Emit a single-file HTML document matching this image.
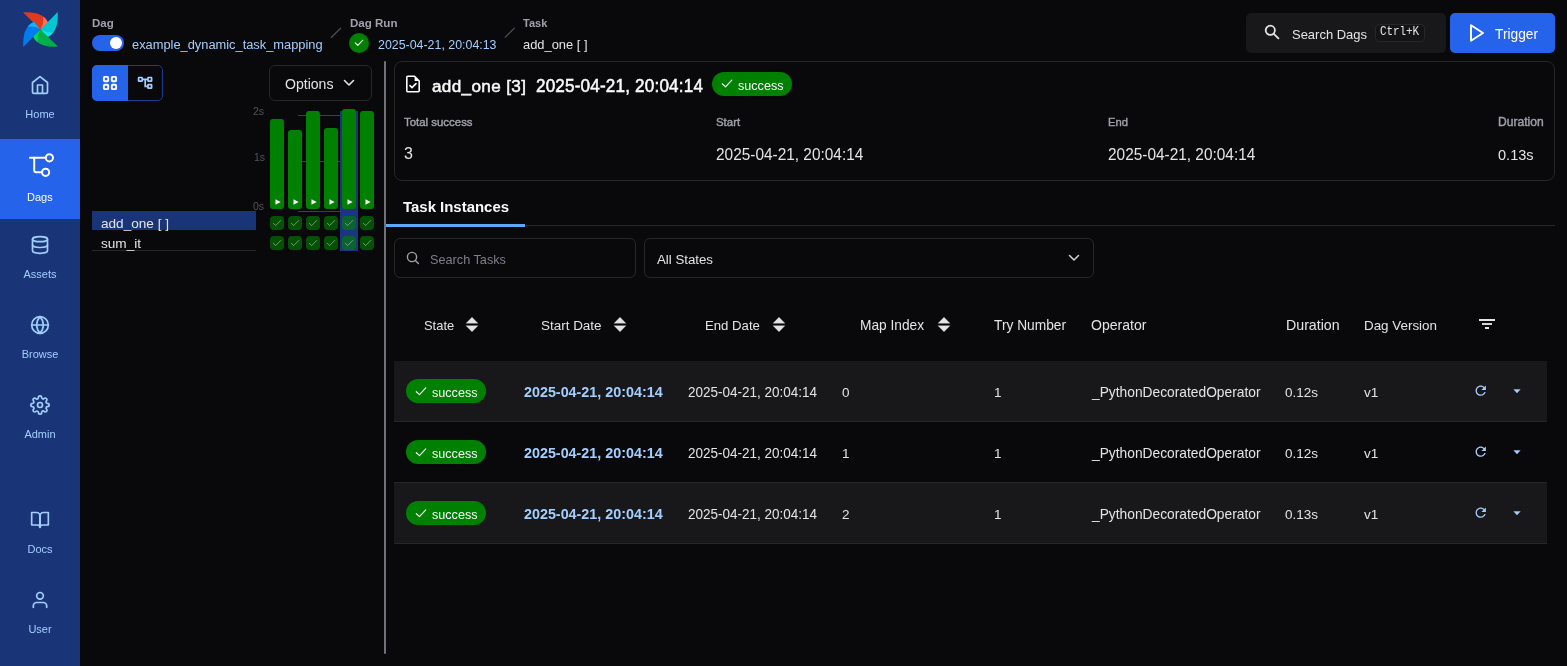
<!DOCTYPE html>
<html><head><meta charset="utf-8">
<style>
*{box-sizing:border-box;margin:0;padding:0}
html,body{width:1567px;height:666px;overflow:hidden;background:#09090b;font-family:"Liberation Sans",sans-serif;color:#fafafa;position:relative}
.a{position:absolute}
.t{position:absolute;white-space:nowrap;will-change:transform}
svg{overflow:visible}
</style></head><body>
<div class="a" style="left:0px;top:0px;width:80px;height:666px;background:#1a3478"></div>
<svg class="a" style="left:23px;top:12px;" width="35" height="35" viewBox="0 0 35 35"><g transform="rotate(0 17.5 17.5)"><path d="M0,0.3 C7,0 14,0.6 19,3.8 C22.3,6 24.2,8.6 25,11 L17.5,17.5 Z" fill="#E43921"/><path d="M20.2,4.6 C22.8,6.6 24.4,9 25,11 L17.5,17.5 C19.6,14.2 20.9,9.8 20.2,4.6 Z" fill="#FF7557"/></g><g transform="rotate(90 17.5 17.5)"><path d="M0,0.3 C7,0 14,0.6 19,3.8 C22.3,6 24.2,8.6 25,11 L17.5,17.5 Z" fill="#00C7D4"/><path d="M20.2,4.6 C22.8,6.6 24.4,9 25,11 L17.5,17.5 C19.6,14.2 20.9,9.8 20.2,4.6 Z" fill="#11E1EE"/></g><g transform="rotate(180 17.5 17.5)"><path d="M0,0.3 C7,0 14,0.6 19,3.8 C22.3,6 24.2,8.6 25,11 L17.5,17.5 Z" fill="#00AD46"/><path d="M20.2,4.6 C22.8,6.6 24.4,9 25,11 L17.5,17.5 C19.6,14.2 20.9,9.8 20.2,4.6 Z" fill="#04D659"/></g><g transform="rotate(270 17.5 17.5)"><path d="M0,0.3 C7,0 14,0.6 19,3.8 C22.3,6 24.2,8.6 25,11 L17.5,17.5 Z" fill="#017CEE"/><path d="M20.2,4.6 C22.8,6.6 24.4,9 25,11 L17.5,17.5 C19.6,14.2 20.9,9.8 20.2,4.6 Z" fill="#0CB6FF"/></g></svg>
<svg class="a" style="left:30px;top:75px;" width="20" height="20" viewBox="0 0 24 24"><g fill="none" stroke="#a3cfff" stroke-width="2" stroke-linecap="round" stroke-linejoin="round"><path d="M3 9l9-7 9 7v11a2 2 0 0 1-2 2H5a2 2 0 0 1-2-2z"/><path d="M9 22V12h6v10"/></g></svg>
<div class="t" style="left:0.00px;top:108.71px;font-size:11px;line-height:11px;color:#a3cfff;font-weight:400;width:80px;text-align:center">Home</div>
<div class="a" style="left:0px;top:139px;width:80px;height:80px;background:#2563eb"></div>
<svg class="a" style="left:28px;top:153px;" width="26" height="26" viewBox="0 0 26 26"><g fill="none" stroke="#fff" stroke-width="2" stroke-linecap="round"><path d="M2 4.8h15.8"/><circle cx="21.4" cy="4.8" r="3.6"/><path d="M6.2 4.8v12.5a2 2 0 0 0 2 2h6"/><circle cx="17.6" cy="19.3" r="3.6"/></g></svg>
<div class="t" style="left:27.40px;top:192.41px;font-size:11px;line-height:11px;color:#fff;font-weight:400;">Dags</div>
<svg class="a" style="left:30px;top:235px;" width="20" height="20" viewBox="0 0 24 24"><g fill="none" stroke="#a3cfff" stroke-width="2" stroke-linecap="round" stroke-linejoin="round"><ellipse cx="12" cy="5" rx="9" ry="3"/><path d="M21 12c0 1.66-4 3-9 3s-9-1.34-9-3"/><path d="M3 5v14c0 1.66 4 3 9 3s9-1.34 9-3V5"/></g></svg>
<div class="t" style="left:0.00px;top:268.71px;font-size:11px;line-height:11px;color:#a3cfff;font-weight:400;width:80px;text-align:center">Assets</div>
<svg class="a" style="left:30px;top:315px;" width="20" height="20" viewBox="0 0 24 24"><g fill="none" stroke="#a3cfff" stroke-width="2" stroke-linecap="round" stroke-linejoin="round"><circle cx="12" cy="12" r="10"/><path d="M2 12h20"/><path d="M12 2a15.3 15.3 0 0 1 4 10 15.3 15.3 0 0 1-4 10 15.3 15.3 0 0 1-4-10 15.3 15.3 0 0 1 4-10z"/></g></svg>
<div class="t" style="left:0.00px;top:348.71px;font-size:11px;line-height:11px;color:#a3cfff;font-weight:400;width:80px;text-align:center">Browse</div>
<svg class="a" style="left:30px;top:395px;" width="20" height="20" viewBox="0 0 24 24"><g fill="none" stroke="#a3cfff" stroke-width="2" stroke-linecap="round" stroke-linejoin="round"><circle cx="12" cy="12" r="3"/><path d="M19.4 15a1.65 1.65 0 0 0 .33 1.82l.06.06a2 2 0 0 1 0 2.83 2 2 0 0 1-2.83 0l-.06-.06a1.65 1.65 0 0 0-1.82-.33 1.65 1.65 0 0 0-1 1.51V21a2 2 0 0 1-2 2 2 2 0 0 1-2-2v-.09A1.65 1.65 0 0 0 9 19.4a1.65 1.65 0 0 0-1.82.33l-.06.06a2 2 0 0 1-2.83 0 2 2 0 0 1 0-2.83l.06-.06a1.65 1.65 0 0 0 .33-1.82 1.65 1.65 0 0 0-1.51-1H3a2 2 0 0 1-2-2 2 2 0 0 1 2-2h.09A1.650 1.65 0 0 0 4.6 9a1.65 1.65 0 0 0-.33-1.82l-.06-.06a2 2 0 0 1 0-2.83 2 2 0 0 1 2.83 0l.06.06a1.65 1.65 0 0 0 1.82.33H9a1.65 1.65 0 0 0 1-1.51V3a2 2 0 0 1 2-2 2 2 0 0 1 2 2v.09a1.65 1.65 0 0 0 1 1.51 1.65 1.65 0 0 0 1.82-.33l.06-.06a2 2 0 0 1 2.83 0 2 2 0 0 1 0 2.83l-.06.06a1.65 1.65 0 0 0-.33 1.82V9a1.65 1.65 0 0 0 1.51 1H21a2 2 0 0 1 2 2 2 2 0 0 1-2 2h-.09a1.65 1.65 0 0 0-1.51 1z"/></g></svg>
<div class="t" style="left:0.00px;top:428.71px;font-size:11px;line-height:11px;color:#a3cfff;font-weight:400;width:80px;text-align:center">Admin</div>
<svg class="a" style="left:30px;top:510px;" width="20" height="20" viewBox="0 0 24 24"><g fill="none" stroke="#a3cfff" stroke-width="2" stroke-linecap="round" stroke-linejoin="round"><path d="M2 3h6a4 4 0 0 1 4 4v14a3 3 0 0 0-3-3H2z"/><path d="M22 3h-6a4 4 0 0 0-4 4v14a3 3 0 0 1 3-3h7z"/></g></svg>
<div class="t" style="left:0.00px;top:543.71px;font-size:11px;line-height:11px;color:#a3cfff;font-weight:400;width:80px;text-align:center">Docs</div>
<svg class="a" style="left:30px;top:590px;" width="20" height="20" viewBox="0 0 24 24"><g fill="none" stroke="#a3cfff" stroke-width="2" stroke-linecap="round" stroke-linejoin="round"><path d="M20 21v-2a4 4 0 0 0-4-4H8a4 4 0 0 0-4 4v2"/><circle cx="12" cy="7" r="4"/></g></svg>
<div class="t" style="left:0.00px;top:623.71px;font-size:11px;line-height:11px;color:#a3cfff;font-weight:400;width:80px;text-align:center">User</div>
<div class="t" style="left:92.00px;top:18.10px;font-size:11.54px;line-height:11.54px;color:#a1a1aa;font-weight:700;">Dag</div>
<div class="a" style="left:92px;top:35px;width:32px;height:16px;background:#2563eb;border-radius:8px"></div>
<div class="a" style="left:110px;top:37px;width:12px;height:12px;background:#fff;border-radius:6px"></div>
<div class="t" style="left:132.40px;top:38.71px;font-size:12.85px;line-height:12.85px;color:#a3cfff;font-weight:400;">example_dynamic_task_mapping</div>
<svg class="a" style="left:0;top:0" width="1567" height="70"><g stroke="#52525b" stroke-width="1.2"><path d="M331 37.7L340.9 27.9"/><path d="M504.8 37.7L514.6 27.9"/></g></svg>
<div class="t" style="left:349.50px;top:18.11px;font-size:11.55px;line-height:11.55px;color:#a1a1aa;font-weight:700;">Dag Run</div>
<div class="a" style="left:349px;top:33px;width:20px;height:20px;background:#008000;border-radius:10px"></div>
<svg class="a" style="left:353px;top:37px;" width="12" height="12" viewBox="0 0 12 12"><path d="M2.2 5.8l2.6 2.6 5-5.2" fill="none" stroke="#fff" stroke-width="1.05" stroke-linecap="round" stroke-linejoin="round"/></svg>
<div class="t" style="left:377.50px;top:38.96px;font-size:12.4px;line-height:12.4px;color:#a3cfff;font-weight:400;transform:scaleY(1.1);transform-origin:0 84.65%;">2025-04-21, 20:04:13</div>
<div class="t" style="left:522.70px;top:18.11px;font-size:11px;line-height:11px;color:#a1a1aa;font-weight:700;">Task</div>
<div class="t" style="left:522.70px;top:38.91px;font-size:12.9px;line-height:12.9px;color:#e4e4e7;font-weight:400;">add_one [ ]</div>
<div class="a" style="left:1246px;top:13px;width:200px;height:40px;background:#18181b;border-radius:5px"></div>
<svg class="a" style="left:1264px;top:24px;" width="16" height="16" viewBox="0 0 16 16"><g fill="none" stroke="#e4e4e7" stroke-width="1.8" stroke-linecap="round"><circle cx="6.3" cy="6.3" r="4.6"/><path d="M9.8 9.8l4.6 4.6"/></g></svg>
<div class="t" style="left:1291.60px;top:29.20px;font-size:12.97px;line-height:12.97px;color:#e4e4e7;font-weight:400;">Search Dags</div>
<div class="a" style="left:1375px;top:24px;width:50px;height:18px;border:1px solid #27272a;border-radius:4px;background:#141416"></div>
<div class="t" style="left:1380.00px;top:27.38px;font-size:11px;line-height:11px;color:#e4e4e7;font-weight:400;font-family:'Liberation Mono',monospace;letter-spacing:-0.1px;transform:scaleY(1.12);transform-origin:0 85%">Ctrl+K</div>
<div class="a" style="left:1450px;top:13px;width:105px;height:40px;background:#2563eb;border-radius:5px"></div>
<svg class="a" style="left:1468px;top:23px;" width="18" height="20" viewBox="0 0 18 20"><path d="M3 2.2L15 10 3 17.8z" fill="none" stroke="#fff" stroke-width="1.9" stroke-linejoin="round"/></svg>
<div class="t" style="left:1495.00px;top:28.01px;font-size:13.74px;line-height:13.74px;color:#fff;font-weight:400;">Trigger</div>
<div class="a" style="left:92px;top:65px;width:71px;height:36px;border:1px solid #1d3b8f;border-radius:5px"></div>
<div class="a" style="left:92px;top:65px;width:35.5px;height:36px;background:#2563eb;border-radius:5px 0 0 5px"></div>
<svg class="a" style="left:102px;top:75px;" width="16" height="16" viewBox="0 0 16 16"><g fill="none" stroke="#fff" stroke-width="1.9"><rect x="1.9" y="1.9" width="4.3" height="4.3" rx="0.9"/><rect x="9.8" y="1.9" width="4.3" height="4.3" rx="0.9"/><rect x="1.9" y="9.8" width="4.3" height="4.3" rx="0.9"/><rect x="9.8" y="9.8" width="4.3" height="4.3" rx="0.9"/></g></svg>
<svg class="a" style="left:137px;top:76px;" width="16" height="14" viewBox="0 0 16 14"><g fill="none" stroke="#a3cfff" stroke-width="1.7"><rect x="1.6" y="1.5" width="3.6" height="3.6" rx="0.4"/><rect x="11" y="1.5" width="3.6" height="3.6" rx="0.4"/><rect x="11" y="8.6" width="3.6" height="3.6" rx="0.4"/><path d="M5.2 3.3h5.8M8.2 3.3v7.1h2.8"/></g></svg>
<div class="a" style="left:269px;top:65px;width:103px;height:36px;border:1px solid #27272a;border-radius:6px"></div>
<div class="t" style="left:284.50px;top:77.01px;font-size:14.07px;line-height:14.07px;color:#e4e4e7;font-weight:400;">Options</div>
<svg class="a" style="left:343px;top:78px;" width="12" height="10" viewBox="0 0 12 10"><path d="M1.5 2.5l4.5 4.5 4.5-4.5" fill="none" stroke="#e4e4e7" stroke-width="1.6" stroke-linecap="round" stroke-linejoin="round"/></svg>
<div class="t" style="left:252.60px;top:105.81px;font-size:10.5px;line-height:10.5px;color:#52525b;font-weight:400;">2s</div>
<div class="t" style="left:253.50px;top:152.31px;font-size:10.5px;line-height:10.5px;color:#52525b;font-weight:400;">1s</div>
<div class="t" style="left:252.60px;top:201.31px;font-size:10.5px;line-height:10.5px;color:#52525b;font-weight:400;">0s</div>
<div class="a" style="left:298px;top:115px;width:42px;height:1px;background:#3f3f46"></div>
<div class="a" style="left:298px;top:161px;width:42px;height:1px;background:#3f3f46"></div>
<div class="a" style="left:298px;top:211px;width:42px;height:1px;background:#3f3f46"></div>
<div class="a" style="left:92px;top:211px;width:164px;height:19px;background:#1a3478;overflow:hidden"></div>
<div class="a" style="left:92px;top:250px;width:164px;height:1px;background:#27272a"></div>
<div class="t" style="left:100.50px;top:217.00px;font-size:13.59px;line-height:13.59px;color:#e4e4e7;font-weight:400;clip-path:inset(0)">add_one [ ]</div>
<div class="t" style="left:100.50px;top:236.70px;font-size:13.6px;line-height:13.6px;color:#e4e4e7;font-weight:400;">sum_it</div>
<div class="a" style="left:340px;top:111px;width:18px;height:140px;background:#1e3a8a;opacity:.92"></div>
<div class="a" style="left:270px;top:119px;width:14px;height:89.5px;background:#008000;border-radius:3px"></div>
<svg class="a" style="left:274.5px;top:199px;" width="6" height="6" viewBox="0 0 6 6"><path d="M0.5 0.3L5.6 3 0.5 5.7z" fill="#fff"/></svg>
<div class="a" style="left:270px;top:216px;width:14px;height:14px;background:#008000;opacity:.62;border-radius:4px"></div>
<svg class="a" style="left:272px;top:219px;" width="10" height="8" viewBox="0 0 10 8"><path d="M1.4 4.4l2.3 2.1 5-5" fill="none" stroke="#b8c8b8" stroke-opacity=".75" stroke-width="0.8" stroke-linecap="round"/></svg>
<div class="a" style="left:270px;top:236px;width:14px;height:14px;background:#008000;opacity:.62;border-radius:4px"></div>
<svg class="a" style="left:272px;top:239px;" width="10" height="8" viewBox="0 0 10 8"><path d="M1.4 4.4l2.3 2.1 5-5" fill="none" stroke="#b8c8b8" stroke-opacity=".75" stroke-width="0.8" stroke-linecap="round"/></svg>
<div class="a" style="left:288px;top:130px;width:14px;height:78.5px;background:#008000;border-radius:3px"></div>
<svg class="a" style="left:292.5px;top:199px;" width="6" height="6" viewBox="0 0 6 6"><path d="M0.5 0.3L5.6 3 0.5 5.7z" fill="#fff"/></svg>
<div class="a" style="left:288px;top:216px;width:14px;height:14px;background:#008000;opacity:.62;border-radius:4px"></div>
<svg class="a" style="left:290px;top:219px;" width="10" height="8" viewBox="0 0 10 8"><path d="M1.4 4.4l2.3 2.1 5-5" fill="none" stroke="#b8c8b8" stroke-opacity=".75" stroke-width="0.8" stroke-linecap="round"/></svg>
<div class="a" style="left:288px;top:236px;width:14px;height:14px;background:#008000;opacity:.62;border-radius:4px"></div>
<svg class="a" style="left:290px;top:239px;" width="10" height="8" viewBox="0 0 10 8"><path d="M1.4 4.4l2.3 2.1 5-5" fill="none" stroke="#b8c8b8" stroke-opacity=".75" stroke-width="0.8" stroke-linecap="round"/></svg>
<div class="a" style="left:306px;top:111px;width:14px;height:97.5px;background:#008000;border-radius:3px"></div>
<svg class="a" style="left:310.5px;top:199px;" width="6" height="6" viewBox="0 0 6 6"><path d="M0.5 0.3L5.6 3 0.5 5.7z" fill="#fff"/></svg>
<div class="a" style="left:306px;top:216px;width:14px;height:14px;background:#008000;opacity:.62;border-radius:4px"></div>
<svg class="a" style="left:308px;top:219px;" width="10" height="8" viewBox="0 0 10 8"><path d="M1.4 4.4l2.3 2.1 5-5" fill="none" stroke="#b8c8b8" stroke-opacity=".75" stroke-width="0.8" stroke-linecap="round"/></svg>
<div class="a" style="left:306px;top:236px;width:14px;height:14px;background:#008000;opacity:.62;border-radius:4px"></div>
<svg class="a" style="left:308px;top:239px;" width="10" height="8" viewBox="0 0 10 8"><path d="M1.4 4.4l2.3 2.1 5-5" fill="none" stroke="#b8c8b8" stroke-opacity=".75" stroke-width="0.8" stroke-linecap="round"/></svg>
<div class="a" style="left:324px;top:128px;width:14px;height:80.5px;background:#008000;border-radius:3px"></div>
<svg class="a" style="left:328.5px;top:199px;" width="6" height="6" viewBox="0 0 6 6"><path d="M0.5 0.3L5.6 3 0.5 5.7z" fill="#fff"/></svg>
<div class="a" style="left:324px;top:216px;width:14px;height:14px;background:#008000;opacity:.62;border-radius:4px"></div>
<svg class="a" style="left:326px;top:219px;" width="10" height="8" viewBox="0 0 10 8"><path d="M1.4 4.4l2.3 2.1 5-5" fill="none" stroke="#b8c8b8" stroke-opacity=".75" stroke-width="0.8" stroke-linecap="round"/></svg>
<div class="a" style="left:324px;top:236px;width:14px;height:14px;background:#008000;opacity:.62;border-radius:4px"></div>
<svg class="a" style="left:326px;top:239px;" width="10" height="8" viewBox="0 0 10 8"><path d="M1.4 4.4l2.3 2.1 5-5" fill="none" stroke="#b8c8b8" stroke-opacity=".75" stroke-width="0.8" stroke-linecap="round"/></svg>
<div class="a" style="left:342px;top:109px;width:14px;height:99.5px;background:#008000;border-radius:3px"></div>
<svg class="a" style="left:346.5px;top:199px;" width="6" height="6" viewBox="0 0 6 6"><path d="M0.5 0.3L5.6 3 0.5 5.7z" fill="#fff"/></svg>
<div class="a" style="left:342px;top:216px;width:14px;height:14px;background:#008000;opacity:.62;border-radius:4px"></div>
<svg class="a" style="left:344px;top:219px;" width="10" height="8" viewBox="0 0 10 8"><path d="M1.4 4.4l2.3 2.1 5-5" fill="none" stroke="#b8c8b8" stroke-opacity=".75" stroke-width="0.8" stroke-linecap="round"/></svg>
<div class="a" style="left:342px;top:236px;width:14px;height:14px;background:#008000;opacity:.62;border-radius:4px"></div>
<svg class="a" style="left:344px;top:239px;" width="10" height="8" viewBox="0 0 10 8"><path d="M1.4 4.4l2.3 2.1 5-5" fill="none" stroke="#b8c8b8" stroke-opacity=".75" stroke-width="0.8" stroke-linecap="round"/></svg>
<div class="a" style="left:360px;top:111px;width:14px;height:97.5px;background:#008000;border-radius:3px"></div>
<svg class="a" style="left:364.5px;top:199px;" width="6" height="6" viewBox="0 0 6 6"><path d="M0.5 0.3L5.6 3 0.5 5.7z" fill="#fff"/></svg>
<div class="a" style="left:360px;top:216px;width:14px;height:14px;background:#008000;opacity:.62;border-radius:4px"></div>
<svg class="a" style="left:362px;top:219px;" width="10" height="8" viewBox="0 0 10 8"><path d="M1.4 4.4l2.3 2.1 5-5" fill="none" stroke="#b8c8b8" stroke-opacity=".75" stroke-width="0.8" stroke-linecap="round"/></svg>
<div class="a" style="left:360px;top:236px;width:14px;height:14px;background:#008000;opacity:.62;border-radius:4px"></div>
<svg class="a" style="left:362px;top:239px;" width="10" height="8" viewBox="0 0 10 8"><path d="M1.4 4.4l2.3 2.1 5-5" fill="none" stroke="#b8c8b8" stroke-opacity=".75" stroke-width="0.8" stroke-linecap="round"/></svg>
<div class="a" style="left:384px;top:61px;width:2px;height:593px;background:#71717a;border-radius:1px"></div>
<div class="a" style="left:394px;top:61px;width:1161px;height:120px;border:1px solid #27272a;border-radius:8px"></div>
<svg class="a" style="left:405px;top:75px;" width="16" height="18" viewBox="0 0 16 18"><path d="M9.6 1.3V5.9h4.6z" fill="#fff"/><g fill="none" stroke="#fff" stroke-width="1.6" stroke-linejoin="round" stroke-linecap="round"><path d="M9.5 1.3H2.8a1 1 0 0 0-1 1v13.4a1 1 0 0 0 1 1h10.4a1 1 0 0 0 1-1V6z"/><path d="M5 10.6l2 2 4-4"/></g></svg>
<div class="t" style="left:431.80px;top:78.01px;font-size:17.1px;line-height:17.1px;color:#fafafa;font-weight:400;letter-spacing:0.36px;-webkit-text-stroke:0.5px #fafafa;">add_one [3]</div>
<div class="t" style="left:535.90px;top:78.04px;font-size:17.1px;line-height:17.1px;color:#fafafa;font-weight:400;letter-spacing:0.18px;transform:scaleY(1.07);transform-origin:0 84.65%;-webkit-text-stroke:0.5px #fafafa;">2025-04-21, 20:04:14</div>
<div class="a" style="left:712px;top:72px;width:80px;height:24px;background:#008000;border-radius:12px"></div>
<svg class="a" style="left:720px;top:77px;" width="14" height="14" viewBox="0 0 14 14"><path d="M2.3 6.9l3.2 2.9 6.3-6.7" fill="none" stroke="#fff" stroke-width="1.15" stroke-linecap="round" stroke-linejoin="round"/></svg>
<div class="t" style="left:737.60px;top:79.70px;font-size:12.62px;line-height:12.62px;color:#fff;font-weight:400;">success</div>
<div class="t" style="left:403.80px;top:117.21px;font-size:11.43px;line-height:11.43px;color:#a1a1aa;font-weight:400;-webkit-text-stroke:0.4px #a1a1aa;">Total success</div>
<div class="t" style="left:716.00px;top:117.21px;font-size:11.43px;line-height:11.43px;color:#a1a1aa;font-weight:400;-webkit-text-stroke:0.4px #a1a1aa;">Start</div>
<div class="t" style="left:1107.50px;top:117.20px;font-size:11.2px;line-height:11.2px;color:#a1a1aa;font-weight:400;-webkit-text-stroke:0.4px #a1a1aa;">End</div>
<div class="t" style="left:1498.20px;top:116.20px;font-size:12.1px;line-height:12.1px;color:#a1a1aa;font-weight:400;-webkit-text-stroke:0.4px #a1a1aa;">Duration</div>
<div class="t" style="left:403.50px;top:146.31px;font-size:16px;line-height:16px;color:#e4e4e7;font-weight:400;">3</div>
<div class="t" style="left:716.00px;top:146.51px;font-size:15.42px;line-height:15.42px;color:#e4e4e7;font-weight:400;transform:scaleY(1.08);transform-origin:0 84.65%;">2025-04-21, 20:04:14</div>
<div class="t" style="left:1107.50px;top:146.51px;font-size:15.42px;line-height:15.42px;color:#e4e4e7;font-weight:400;transform:scaleY(1.08);transform-origin:0 84.65%;">2025-04-21, 20:04:14</div>
<div class="t" style="left:1498.20px;top:147.53px;font-size:14.55px;line-height:14.55px;color:#e4e4e7;font-weight:400;transform:scaleY(1.06);transform-origin:0 84.65%;">0.13s</div>
<div class="t" style="left:403.00px;top:200.01px;font-size:14.94px;line-height:14.94px;color:#fafafa;font-weight:700;">Task Instances</div>
<div class="a" style="left:386px;top:225px;width:1169px;height:1px;background:#27272a"></div>
<div class="a" style="left:386px;top:224px;width:139px;height:3px;background:#60a5fa"></div>
<div class="a" style="left:394px;top:238px;width:242px;height:40px;border:1px solid #27272a;border-radius:6px"></div>
<svg class="a" style="left:406px;top:251px;" width="14" height="14" viewBox="0 0 14 14"><g fill="none" stroke="#a1a1aa" stroke-width="1.4" stroke-linecap="round"><circle cx="6" cy="6" r="4.6"/><path d="M9.4 9.4l3 3"/></g></svg>
<div class="t" style="left:429.60px;top:254.00px;font-size:12.7px;line-height:12.7px;color:#7f7f87;font-weight:400;">Search Tasks</div>
<div class="a" style="left:644px;top:238px;width:450px;height:40px;border:1px solid #27272a;border-radius:6px"></div>
<div class="t" style="left:657.30px;top:253.01px;font-size:13.26px;line-height:13.26px;color:#e4e4e7;font-weight:400;">All States</div>
<svg class="a" style="left:1067px;top:253px;" width="14" height="10" viewBox="0 0 14 10"><path d="M2.5 2.5l4.5 4.5 4.5-4.5" fill="none" stroke="#d4d4d8" stroke-width="1.5" stroke-linecap="round" stroke-linejoin="round"/></svg>
<div class="t" style="left:423.50px;top:320.20px;font-size:12.93px;line-height:12.93px;color:#e4e4e7;font-weight:400;">State</div>
<svg class="a" style="left:466px;top:316.7px;" width="12" height="15" viewBox="0 0 12 15"><path d="M6 0.2L11.9 6.3H0.1z M6 14.8L11.9 8.7H0.1z" fill="#e4e4e7" stroke="#e4e4e7" stroke-width="0.3" stroke-linejoin="round"/></svg>
<div class="t" style="left:540.90px;top:319.21px;font-size:13.46px;line-height:13.46px;color:#e4e4e7;font-weight:400;">Start Date</div>
<svg class="a" style="left:614px;top:316.7px;" width="12" height="15" viewBox="0 0 12 15"><path d="M6 0.2L11.9 6.3H0.1z M6 14.8L11.9 8.7H0.1z" fill="#e4e4e7" stroke="#e4e4e7" stroke-width="0.3" stroke-linejoin="round"/></svg>
<div class="t" style="left:705.20px;top:319.20px;font-size:13.17px;line-height:13.17px;color:#e4e4e7;font-weight:400;">End Date</div>
<svg class="a" style="left:773px;top:316.7px;" width="12" height="15" viewBox="0 0 12 15"><path d="M6 0.2L11.9 6.3H0.1z M6 14.8L11.9 8.7H0.1z" fill="#e4e4e7" stroke="#e4e4e7" stroke-width="0.3" stroke-linejoin="round"/></svg>
<div class="t" style="left:859.90px;top:319.20px;font-size:13.73px;line-height:13.73px;color:#e4e4e7;font-weight:400;">Map Index</div>
<svg class="a" style="left:937.5px;top:316.7px;" width="12" height="15" viewBox="0 0 12 15"><path d="M6 0.2L11.9 6.3H0.1z M6 14.8L11.9 8.7H0.1z" fill="#e4e4e7" stroke="#e4e4e7" stroke-width="0.3" stroke-linejoin="round"/></svg>
<div class="t" style="left:994.30px;top:319.21px;font-size:13.74px;line-height:13.74px;color:#e4e4e7;font-weight:400;">Try Number</div>
<div class="t" style="left:1091.40px;top:318.20px;font-size:14.04px;line-height:14.04px;color:#e4e4e7;font-weight:400;">Operator</div>
<div class="t" style="left:1285.60px;top:318.21px;font-size:14.2px;line-height:14.2px;color:#e4e4e7;font-weight:400;">Duration</div>
<div class="t" style="left:1364.30px;top:319.20px;font-size:13.4px;line-height:13.4px;color:#e4e4e7;font-weight:400;">Dag Version</div>
<div class="a" style="left:1479px;top:319px;width:16px;height:2px;background:#e4e4e7"></div>
<div class="a" style="left:1482px;top:323px;width:10px;height:2px;background:#d4d4d8"></div>
<div class="a" style="left:1485px;top:327px;width:4px;height:2px;background:#e4e4e7"></div>
<div class="a" style="left:394px;top:361px;width:1153px;height:61px;background:#18181b;border-bottom:1px solid #27272a"></div>
<div class="a" style="left:406px;top:379.0px;width:80px;height:24px;background:#008000;border-radius:12px"></div>
<svg class="a" style="left:414px;top:384.5px;" width="14" height="14" viewBox="0 0 14 14"><path d="M2.3 6.7l3.2 2.9 6.3-6.7" fill="none" stroke="#fff" stroke-width="1.15" stroke-linecap="round" stroke-linejoin="round"/></svg>
<div class="t" style="left:432.30px;top:387.11px;font-size:12.62px;line-height:12.62px;color:#fff;font-weight:400;">success</div>
<div class="t" style="left:524.00px;top:385.12px;font-size:14.34px;line-height:14.34px;color:#a3cfff;font-weight:700;transform:scaleY(1.08);transform-origin:0 84.65%;">2025-04-21, 20:04:14</div>
<div class="t" style="left:687.80px;top:386.15px;font-size:13.49px;line-height:13.49px;color:#e4e4e7;font-weight:400;transform:scaleY(1.1);transform-origin:0 84.65%;">2025-04-21, 20:04:14</div>
<div class="t" style="left:842.30px;top:386.12px;font-size:13.5px;line-height:13.5px;color:#e4e4e7;font-weight:400;">0</div>
<div class="t" style="left:994.00px;top:386.12px;font-size:13.5px;line-height:13.5px;color:#e4e4e7;font-weight:400;">1</div>
<div class="t" style="left:1091.50px;top:386.10px;font-size:13.79px;line-height:13.79px;color:#e4e4e7;font-weight:400;">_PythonDecoratedOperator</div>
<div class="t" style="left:1285.00px;top:386.12px;font-size:13.5px;line-height:13.5px;color:#e4e4e7;font-weight:400;">0.12s</div>
<div class="t" style="left:1363.70px;top:386.12px;font-size:13.5px;line-height:13.5px;color:#e4e4e7;font-weight:400;">v1</div>
<svg class="a" style="left:1473.1px;top:383.2px;" width="15.44" height="15.44" viewBox="0 0 24 24"><path fill="#a3cfff" d="M17.65 6.35C16.2 4.9 14.21 4 12 4c-4.42 0-7.99 3.58-7.99 8s3.57 8 7.99 8c3.73 0 6.84-2.55 7.73-6h-2.08c-.82 2.330-3.04 4-5.650 4-3.31 0-6-2.69-6-6s2.69-6 6-6c1.66 0 3.14.69 4.22 1.78L13 11h7V4l-2.35 2.35z"/></svg>
<svg class="a" style="left:1513px;top:388.9px;" width="8" height="5" viewBox="0 0 8 5"><path d="M0.8 0.5h6.4L4 4z" fill="#a3cfff" stroke="#a3cfff" stroke-width="0.4" stroke-linejoin="round"/></svg>
<div class="a" style="left:394px;top:422px;width:1153px;height:61px;background:#09090b;border-bottom:1px solid #27272a"></div>
<div class="a" style="left:406px;top:440.0px;width:80px;height:24px;background:#008000;border-radius:12px"></div>
<svg class="a" style="left:414px;top:445.5px;" width="14" height="14" viewBox="0 0 14 14"><path d="M2.3 6.7l3.2 2.9 6.3-6.7" fill="none" stroke="#fff" stroke-width="1.15" stroke-linecap="round" stroke-linejoin="round"/></svg>
<div class="t" style="left:432.30px;top:448.11px;font-size:12.62px;line-height:12.62px;color:#fff;font-weight:400;">success</div>
<div class="t" style="left:524.00px;top:446.12px;font-size:14.34px;line-height:14.34px;color:#a3cfff;font-weight:700;transform:scaleY(1.08);transform-origin:0 84.65%;">2025-04-21, 20:04:14</div>
<div class="t" style="left:687.80px;top:447.15px;font-size:13.49px;line-height:13.49px;color:#e4e4e7;font-weight:400;transform:scaleY(1.1);transform-origin:0 84.65%;">2025-04-21, 20:04:14</div>
<div class="t" style="left:842.30px;top:447.12px;font-size:13.5px;line-height:13.5px;color:#e4e4e7;font-weight:400;">1</div>
<div class="t" style="left:994.00px;top:447.12px;font-size:13.5px;line-height:13.5px;color:#e4e4e7;font-weight:400;">1</div>
<div class="t" style="left:1091.50px;top:447.10px;font-size:13.79px;line-height:13.79px;color:#e4e4e7;font-weight:400;">_PythonDecoratedOperator</div>
<div class="t" style="left:1285.00px;top:447.12px;font-size:13.5px;line-height:13.5px;color:#e4e4e7;font-weight:400;">0.12s</div>
<div class="t" style="left:1363.70px;top:447.12px;font-size:13.5px;line-height:13.5px;color:#e4e4e7;font-weight:400;">v1</div>
<svg class="a" style="left:1473.1px;top:444.2px;" width="15.44" height="15.44" viewBox="0 0 24 24"><path fill="#a3cfff" d="M17.65 6.35C16.2 4.9 14.21 4 12 4c-4.42 0-7.99 3.58-7.99 8s3.57 8 7.99 8c3.73 0 6.84-2.55 7.73-6h-2.08c-.82 2.330-3.04 4-5.650 4-3.31 0-6-2.69-6-6s2.69-6 6-6c1.66 0 3.14.69 4.22 1.78L13 11h7V4l-2.35 2.35z"/></svg>
<svg class="a" style="left:1513px;top:449.9px;" width="8" height="5" viewBox="0 0 8 5"><path d="M0.8 0.5h6.4L4 4z" fill="#a3cfff" stroke="#a3cfff" stroke-width="0.4" stroke-linejoin="round"/></svg>
<div class="a" style="left:394px;top:483px;width:1153px;height:61px;background:#18181b;border-bottom:1px solid #27272a"></div>
<div class="a" style="left:406px;top:501.0px;width:80px;height:24px;background:#008000;border-radius:12px"></div>
<svg class="a" style="left:414px;top:506.5px;" width="14" height="14" viewBox="0 0 14 14"><path d="M2.3 6.7l3.2 2.9 6.3-6.7" fill="none" stroke="#fff" stroke-width="1.15" stroke-linecap="round" stroke-linejoin="round"/></svg>
<div class="t" style="left:432.30px;top:509.11px;font-size:12.62px;line-height:12.62px;color:#fff;font-weight:400;">success</div>
<div class="t" style="left:524.00px;top:507.12px;font-size:14.34px;line-height:14.34px;color:#a3cfff;font-weight:700;transform:scaleY(1.08);transform-origin:0 84.65%;">2025-04-21, 20:04:14</div>
<div class="t" style="left:687.80px;top:508.15px;font-size:13.49px;line-height:13.49px;color:#e4e4e7;font-weight:400;transform:scaleY(1.1);transform-origin:0 84.65%;">2025-04-21, 20:04:14</div>
<div class="t" style="left:842.30px;top:508.12px;font-size:13.5px;line-height:13.5px;color:#e4e4e7;font-weight:400;">2</div>
<div class="t" style="left:994.00px;top:508.12px;font-size:13.5px;line-height:13.5px;color:#e4e4e7;font-weight:400;">1</div>
<div class="t" style="left:1091.50px;top:508.10px;font-size:13.79px;line-height:13.79px;color:#e4e4e7;font-weight:400;">_PythonDecoratedOperator</div>
<div class="t" style="left:1285.00px;top:508.12px;font-size:13.5px;line-height:13.5px;color:#e4e4e7;font-weight:400;">0.13s</div>
<div class="t" style="left:1363.70px;top:508.12px;font-size:13.5px;line-height:13.5px;color:#e4e4e7;font-weight:400;">v1</div>
<svg class="a" style="left:1473.1px;top:505.2px;" width="15.44" height="15.44" viewBox="0 0 24 24"><path fill="#a3cfff" d="M17.65 6.35C16.2 4.9 14.21 4 12 4c-4.42 0-7.99 3.58-7.99 8s3.57 8 7.99 8c3.73 0 6.84-2.55 7.73-6h-2.08c-.82 2.330-3.04 4-5.650 4-3.31 0-6-2.69-6-6s2.69-6 6-6c1.66 0 3.14.69 4.22 1.78L13 11h7V4l-2.35 2.35z"/></svg>
<svg class="a" style="left:1513px;top:510.9px;" width="8" height="5" viewBox="0 0 8 5"><path d="M0.8 0.5h6.4L4 4z" fill="#a3cfff" stroke="#a3cfff" stroke-width="0.4" stroke-linejoin="round"/></svg>
</body></html>
